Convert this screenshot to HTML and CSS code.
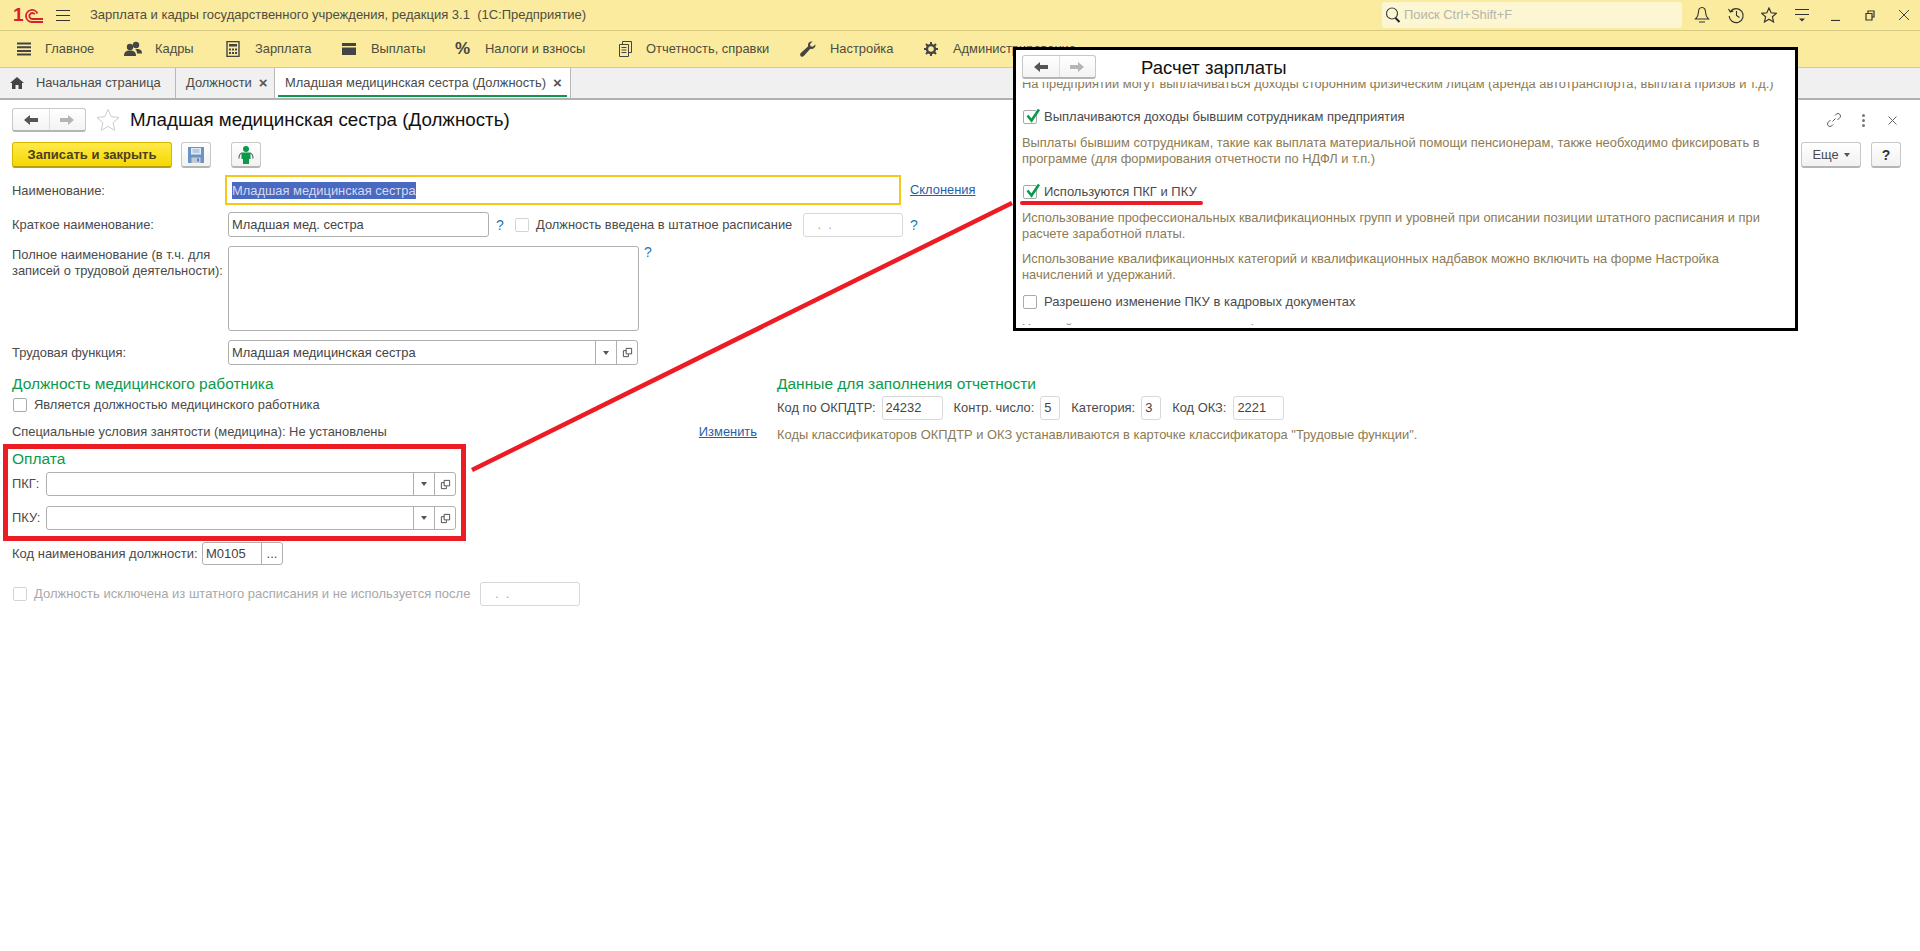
FILE: index.html
```html
<!DOCTYPE html>
<html lang="ru">
<head>
    <meta charset="UTF-8">
    <title>Младшая медицинская сестра (Должность)</title>
    <link rel="stylesheet" href="styles.css">
</head>
<body>
    <svg class="sprite" width="0" height="0">
        <symbol id="i-back" viewBox="0 0 16 12"><path d="M1 6l6-5v3h8v4H7v3z"/></symbol>
        <symbol id="i-next" viewBox="0 0 16 12"><path d="M15 6L9 1v3H1v4h8v3z"/></symbol>
        <symbol id="i-open" viewBox="0 0 12 12"><path d="M4.5 1.5h6v6h-6zM4.5 4H1.5v6.5H7V8" fill="none" stroke="#444" stroke-width="1"/></symbol>
        <symbol id="i-check" viewBox="0 0 16 16"><path d="M2.5 7.5l4 5L14 1.5" fill="none" stroke="#0a9a4c" stroke-width="2.6"/></symbol>
        <symbol id="i-star" viewBox="0 0 24 24"><path d="M12 1.5l3.2 7.2 7.8.8-5.9 5.2 1.7 7.700L12 18.400l-6.800 4 1.700-7.700L1 9.500l7.800-.8z"/></symbol>
    </svg>

    <div class="titlebar">
        <div class="logo">
            <span>1</span>
            <svg width="18" height="14" viewBox="0 0 18 14"><path d="M12.500 4.500A6 6 0 1 0 7 13h11M9.800 5.300A3 3 0 1 0 7 10h11" fill="none" stroke="#d8202a" stroke-width="1.800"/></svg>
        </div>
        <div class="burger"><i></i><i></i><i></i></div>
        <div class="app-title">Зарплата и кадры государственного учреждения, редакция 3.1&nbsp; (1С:Предприятие)</div>
        <div class="search">
            <svg width="16" height="18" viewBox="0 0 16 18"><circle cx="7" cy="7.500" r="5.500" fill="none" stroke="#444" stroke-width="1.200"/><path d="M10.500 12l4 4" stroke="#222" stroke-width="2"/></svg>
            <span>Поиск Ctrl+Shift+F</span>
        </div>
        <div class="win-icons">
            <svg class="wi-bell" width="16" height="18" viewBox="0 0 16 18"><path d="M8 1.500c-2.500 0-3.500 2-3.500 4.500 0 3-1 5-3 7h13c-2-2-3-4-3-7 0-2.500-1-4.500-3.500-4.500zM5 16h6" fill="none" stroke="#333" stroke-width="1.100"/></svg>
            <svg class="wi-clock" width="18" height="18" viewBox="0 0 18 18"><path d="M3.500 5.500A7 7 0 1 1 2.200 10M1.500 3l1.800 3 3-1M9.500 5v4.500l3 2" fill="none" stroke="#333" stroke-width="1.100"/></svg>
            <svg class="wi-star" width="16" height="16" viewBox="0 0 24 24"><use href="#i-star" fill="none" stroke="#333" stroke-width="1.800"/></svg>
            <svg class="wi-list" width="16" height="16" viewBox="0 0 16 16"><path d="M1 2.500h14M1 7.500h14" stroke="#333" stroke-width="1.100"/><path d="M5 11.500h6l-3 3z" fill="#333"/></svg>
            <svg class="wi-min" width="10" height="10" viewBox="0 0 10 10"><path d="M0 9.500h9" stroke="#333" stroke-width="1.200"/></svg>
            <svg class="wi-max" width="10" height="11" viewBox="0 0 10 11"><path d="M3 3V1h6v6H7M1 3.500h6v6.500H1z" fill="none" stroke="#333" stroke-width="1.200"/></svg>
            <svg class="wi-close" width="12" height="12" viewBox="0 0 12 12"><path d="M1 1l10 10M11 1L1 11" stroke="#444" stroke-width="1"/></svg>
        </div>
    </div>

    <div class="menubar">
        <div class="menu-item m-main"><svg width="14" height="14" viewBox="0 0 14 14"><path d="M0 1.500h14M0 5.200h14M0 8.900h14M0 12.600h14" stroke="#444" stroke-width="2"/></svg><span>Главное</span></div>
        <div class="menu-item m-staff"><svg width="18" height="16" viewBox="0 0 18 16"><circle cx="6" cy="6" r="3.200" fill="#444"/><circle cx="12" cy="4" r="3.200" fill="#444"/><path d="M0 15c0-4 2-5.500 6-5.500s6 1.500 6 5.500zM13 8c3 0 5 1 5 4.500h-5c0-2-.5-3.500-2-4z" fill="#444"/></svg><span>Кадры</span></div>
        <div class="menu-item m-pay"><svg width="14" height="16" viewBox="0 0 14 16"><path d="M1 .5h12v15H1z" fill="none" stroke="#444" stroke-width="1.400"/><path d="M3 3h8v2.500H3zM3 7.500h2v2H3zM6 7.500h2v2H6zM9 7.500h2v2H9zM3 11h2v2H3zM6 11h2v2H6zM9 11h2v2H9z" fill="#444"/></svg><span>Зарплата</span></div>
        <div class="menu-item m-out"><svg width="14" height="12" viewBox="0 0 14 12"><path d="M0 0h14v3H0zM0 4.500h14V12H0z" fill="#444"/></svg><span>Выплаты</span></div>
        <div class="menu-item m-tax"><b class="pct">%</b><span>Налоги и взносы</span></div>
        <div class="menu-item m-rep"><svg width="13" height="16" viewBox="0 0 13 16"><path d="M3.500 3V.5h9v11H10M.5 3.500h9v12h-9zM2.500 6.500h5M2.500 9h5M2.500 11.500h5" fill="none" stroke="#444" stroke-width="1"/></svg><span>Отчетность, справки</span></div>
        <div class="menu-item m-set"><svg width="16" height="16" viewBox="0 0 16 16"><path d="M15.500 3.500l-2.800 2.300-2.200-.6-.5-2.200L12.500.5C10 0 8 1.500 8 4c0 .6.100 1 .2 1.300L.8 12c-1 1-.8 2.500 0 3.200s2 .8 3-.2l6.500-7.200c2.800.9 5.600-1.200 5.200-4.300z" fill="#444"/></svg><span>Настройка</span></div>
        <div class="menu-item m-admin"><svg width="14" height="14" viewBox="0 0 14 14"><circle cx="7" cy="7" r="4" fill="none" stroke="#444" stroke-width="2.400"/><path d="M7 0v3M7 11v3M0 7h3M11 7h3M2 2l2 2M10 10l2 2M12 2l-2 2M4 10l-2 2" stroke="#444" stroke-width="2"/></svg><span>Администрирование</span></div>
    </div>

    <div class="tabs">
        <div class="tab tab-home"><svg width="14" height="12" viewBox="0 0 14 12"><path d="M7 0l7 6h-2v6H8.500V8h-3v4H2V6H0z" fill="#444"/></svg><span>Начальная страница</span></div>
        <div class="tab tab-list"><span>Должности</span><b class="tab-x">×</b></div>
        <div class="tab tab-active"><span>Младшая медицинская сестра (Должность)</span><b class="tab-x">×</b></div>
    </div>

    <div class="page">
        <div class="page-head">
            <div class="nav-btns">
                <div class="nav-btn"><svg width="16" height="12"><use href="#i-back" fill="#555"/></svg></div>
                <div class="nav-btn"><svg width="16" height="12"><use href="#i-next" fill="#b5b5b5"/></svg></div>
            </div>
            <svg class="fav" width="24" height="24" viewBox="0 0 24 24"><use href="#i-star" fill="#fff" stroke="#ccc" stroke-width="1"/></svg>
            <h1 class="page-title">Младшая медицинская сестра (Должность)</h1>
            <div class="head-tools">
                <svg width="16" height="16" viewBox="0 0 16 16"><path d="M6.500 9.500l3-3M9 3.500l1.500-1.500a2.500 2.500 0 0 1 3.500 3.500L11.500 8M7 12.500L5.500 14A2.500 2.500 0 0 1 2 10.500L4.500 8" fill="none" stroke="#555" stroke-width="1"/></svg>
                <div class="kebab"><i></i><i></i><i></i></div>
                <svg class="head-close" width="9" height="9" viewBox="0 0 9 9"><path d="M.5.5l8 8M8.500.5l-8 8" stroke="#666" stroke-width="1"/></svg>
            </div>
        </div>

        <div class="toolbar">
            <div class="btn btn-primary">Записать и закрыть</div>
            <div class="btn btn-icon btn-save">
                <svg width="16" height="16" viewBox="0 0 16 16"><path d="M0 0h16v16H0z" fill="#6a94c4"/><path d="M3 1h10v6.500H3z" fill="#e3ecf6"/><path d="M4.500 3h7M4.500 5h7" stroke="#8aa8cc" stroke-width="1"/><path d="M3.500 10.500h9V16h-9z" fill="#c6ccd2"/><path d="M9 11.500h2v3H9z" fill="#5b85b8"/></svg>
            </div>
            <div class="btn btn-icon btn-staff">
                <svg width="18" height="18" viewBox="0 0 18 18"><path d="M5 7C3 7.500 2 8.500 2 12.500M13 7c2 .5 3 1.500 3 5.500" fill="none" stroke="#666" stroke-width="1.200"/><circle cx="9" cy="3" r="3" fill="#0c9a4a"/><path d="M4.500 6.500h9v6.500h-1.500v5H6v-5H4.500z" fill="#0c9a4a"/></svg>
            </div>
            <div class="toolbar-end">
                <div class="btn btn-more">Еще <i class="caret"></i></div>
                <div class="btn btn-help">?</div>
            </div>
        </div>

        <div class="row row-name">
            <label class="label">Наименование:</label>
            <div class="field field-focus"><span class="selected">Младшая медицинская сестра</span></div>
            <a class="link link-decl">Склонения</a>
        </div>
        <div class="row row-short">
            <label class="label">Краткое наименование:</label>
            <div class="field field-short">Младшая мед. сестра</div>
            <span class="hint">?</span>
            <span class="checkbox checkbox-off"></span>
            <span class="check-text">Должность введена в штатное расписание</span>
            <div class="field field-date">&nbsp;.&nbsp;&nbsp;.</div>
            <span class="hint">?</span>
        </div>
        <div class="row row-full">
            <label class="label">Полное наименование (в т.ч. для записей о трудовой деятельности):</label>
            <div class="field field-area"></div>
            <span class="hint">?</span>
        </div>
        <div class="row row-func">
            <label class="label">Трудовая функция:</label>
            <div class="field field-select field-func">
                <span class="field-value">Младшая медицинская сестра</span>
                <span class="field-btn"><i class="caret"></i></span>
                <span class="field-btn"><svg width="11" height="11"><use href="#i-open"/></svg></span>
            </div>
        </div>

        <div class="columns">
            <div class="col-left">
                <h2 class="section">Должность медицинского работника</h2>
                <div class="check-row">
                    <span class="checkbox"></span>
                    <span>Является должностью медицинского работника</span>
                </div>
                <div class="special-row">
                    <span>Специальные условия занятости (медицина): Не установлены</span>
                    <a class="link">Изменить</a>
                </div>
                <h2 class="section section-pay">Оплата</h2>
                <div class="pay-row">
                    <label>ПКГ:</label>
                    <div class="field field-select field-pay">
                        <span class="field-value"></span>
                        <span class="field-btn"><i class="caret"></i></span>
                        <span class="field-btn"><svg width="11" height="11"><use href="#i-open"/></svg></span>
                    </div>
                </div>
                <div class="pay-row pay-row-second">
                    <label>ПКУ:</label>
                    <div class="field field-select field-pay">
                        <span class="field-value"></span>
                        <span class="field-btn"><i class="caret"></i></span>
                        <span class="field-btn"><svg width="11" height="11"><use href="#i-open"/></svg></span>
                    </div>
                </div>
                <div class="code-row">
                    <label>Код наименования должности:</label>
                    <div class="field field-select field-code">
                        <span class="field-value">М0105</span>
                        <span class="field-btn">...</span>
                    </div>
                </div>
                <div class="excluded-row">
                    <span class="checkbox checkbox-off"></span>
                    <span>Должность исключена из штатного расписания и не используется после</span>
                    <div class="field field-date">&nbsp;.&nbsp;&nbsp;.</div>
                </div>
            </div>
            <div class="col-right">
                <h2 class="section">Данные для заполнения отчетности</h2>
                <div class="codes-row">
                    <label>Код по ОКПДТР:</label><div class="field code-box code-w61">24232</div>
                    <label class="code-next">Контр. число:</label><div class="field code-box code-w20">5</div>
                    <label class="code-next">Категория:</label><div class="field code-box code-w20">3</div>
                    <label class="code-next">Код ОКЗ:</label><div class="field code-box code-w51">2221</div>
                </div>
                <div class="note">Коды классификаторов ОКПДТР и ОКЗ устанавливаются в карточке классификатора "Трудовые функции".</div>
            </div>
        </div>
    </div>

    <!-- annotations pasted over the screenshot -->
    <div class="mark-box"></div>
    <svg class="mark-line" width="1920" height="951"><line x1="472" y1="470" x2="1012" y2="203" stroke="#ed1c24" stroke-width="4.500"/></svg>

    <div class="inset">
        <div class="inset-head">
            <div class="nav-btns">
                <div class="nav-btn"><svg width="16" height="12"><use href="#i-back" fill="#555"/></svg></div>
                <div class="nav-btn"><svg width="16" height="12"><use href="#i-next" fill="#b5b5b5"/></svg></div>
            </div>
            <div class="inset-title">Расчет зарплаты</div>
        </div>
        <div class="inset-body">
            <p class="desc desc-cut">На предприятии могут выплачиваться доходы сторонним физическим лицам (аренда автотранспорта, выплата призов и т.д.)</p>
            <div class="inset-check inset-check-1">
                <span class="checkbox"><svg width="16" height="16"><use href="#i-check"/></svg></span>
                <span>Выплачиваются доходы бывшим сотрудникам предприятия</span>
            </div>
            <p class="desc desc-1">Выплаты бывшим сотрудникам, такие как выплата материальной помощи пенсионерам, также необходимо фиксировать в<br>программе (для формирования отчетности по НДФЛ и т.п.)</p>
            <div class="inset-check inset-check-2">
                <span class="checkbox"><svg width="16" height="16"><use href="#i-check"/></svg></span>
                <span>Используются ПКГ и ПКУ</span>
            </div>
            <p class="desc desc-2">Использование профессиональных квалификационных групп и уровней при описании позиции штатного расписания и при<br>расчете заработной платы.</p>
            <p class="desc desc-3">Использование квалификационных категорий и квалификационных надбавок можно включить на форме Настройка<br>начислений и удержаний.</p>
            <div class="inset-check inset-check-3">
                <span class="checkbox"></span>
                <span>Разрешено изменение ПКУ в кадровых документах</span>
            </div>
            <p class="desc desc-last">Настройка ставок и окладов по квалификационным группам доступна в справочнике</p>
        </div>
        <div class="inset-mark"></div>
    </div>
</body>
</html>
```

FILE: styles.css
```css
* {
    margin: 0;
    padding: 0;
    box-sizing: border-box;
}

body {
    position: relative;
    width: 1920px;
    height: 951px;
    overflow: hidden;
    background: #fff;
    color: #4a4a4a;
    font-family: 'Liberation Sans', Arial, sans-serif;
    font-size: 12.9px;
    line-height: 16px;
}

.sprite {
    position: absolute;
}

/* title bar */
.titlebar {
    height: 31px;
    display: flex;
    align-items: center;
    background: #fbeb9f;
    border-bottom: 1px solid #d9ca82;
    padding-left: 13px;
}

.logo {
    width: 30px;
    height: 16px;
    display: flex;
    align-items: flex-end;
    color: #d8202a;
    font-size: 19px;
    font-weight: 700;
    line-height: 16px;
}

.logo span {
    width: 12px;
}

.burger {
    width: 14px;
    margin-left: 13px;
    display: flex;
    flex-direction: column;
    gap: 4px;
}

.burger i {
    display: block;
    height: 1px;
    background: #333;
}

.app-title {
    margin-left: 20px;
    width: 1292px;
    color: #4d4d40;
    font-size: 13px;
}

.search {
    width: 300px;
    height: 26px;
    background: #fdf6d2;
    border-radius: 3px;
    display: flex;
    align-items: center;
    padding-left: 3px;
    color: #b5b5a8;
}

.search span {
    margin-left: 3px;
}

.win-icons {
    display: flex;
    align-items: center;
    margin-left: 12px;
}

.wi-clock { margin-left: 17px; }
.wi-star { margin-left: 16px; }
.wi-list { margin-left: 17px; }
.wi-min { margin-left: 21px; margin-top: 2px; }
.wi-max { margin-left: 24px; }
.wi-close { margin-left: 23px; }

/* sections menu */
.menubar {
    height: 37px;
    display: flex;
    align-items: center;
    background: #fbeb9f;
    border-bottom: 1px solid #d9ca82;
    color: #4d4d40;
}

.menu-item {
    display: flex;
    align-items: center;
    flex-shrink: 0;
}

.pct {
    width: 15px;
    font-size: 17px;
    font-weight: 700;
    color: #444;
}

.m-main { margin-left: 17px; width: 107px; }
.m-main span { margin-left: 14px; }
.m-staff { width: 102px; }
.m-staff span { margin-left: 13px; }
.m-pay { width: 116px; }
.m-pay span { margin-left: 15px; }
.m-out { width: 113px; }
.m-out span { margin-left: 15px; }
.m-tax { width: 164px; }
.m-tax span { margin-left: 15px; }
.m-rep { width: 181px; }
.m-rep span { margin-left: 14px; }
.m-set { width: 124px; }
.m-set span { margin-left: 14px; }
.m-admin span { margin-left: 15px; }

/* open windows tabs */
.tabs {
    height: 32px;
    display: flex;
    background: #f0f0f0;
    border-bottom: 2px solid #b0b0b0;
    color: #4a4a4a;
}

.tab {
    display: flex;
    align-items: center;
    border-right: 1px solid #b8b8b8;
}

.tab-home {
    width: 176px;
    padding-left: 10px;
}

.tab-home span {
    margin-left: 12px;
}

.tab-list {
    width: 99px;
    padding-left: 10px;
}

.tab-active {
    width: 296px;
    padding-left: 10px;
    background: #fff;
    position: relative;
}

.tab-active::after {
    content: "";
    position: absolute;
    left: 3px;
    right: 3px;
    bottom: 1px;
    height: 2px;
    background: #0a9a4c;
}

.tab-x {
    margin-left: 7px;
    font-size: 15px;
    color: #555;
}

/* form */
.page {
    padding: 8px 0 0 12px;
}

.page-head {
    height: 24px;
    display: flex;
    align-items: center;
}

.nav-btns {
    display: flex;
    width: 74px;
    height: 24px;
    background: linear-gradient(#fff, #f3f3f3);
    border: 1px solid #c8c8c8;
    border-bottom: 2px solid #b5b5b5;
    border-radius: 3px;
}

.nav-btn {
    flex: 1;
    display: flex;
    align-items: center;
    justify-content: center;
}

.nav-btn + .nav-btn {
    border-left: 1px solid #ddd;
}

.fav {
    margin-left: 10px;
}

.page-title {
    margin-left: 10px;
    font-size: 18.750px;
    font-weight: 400;
    color: #111;
}

.head-tools {
    margin-left: auto;
    margin-right: 23px;
    display: flex;
    align-items: center;
    gap: 20px;
}

.head-close {
    margin-left: 3px;
}

.kebab {
    display: flex;
    flex-direction: column;
    gap: 2px;
}

.kebab i {
    display: block;
    width: 3px;
    height: 3px;
    border-radius: 50%;
    background: #777;
}

.toolbar {
    margin-top: 10px;
    height: 26px;
    display: flex;
}

.btn {
    display: flex;
    align-items: center;
    justify-content: center;
    height: 26px;
    background: linear-gradient(#fff, #f1f1f1);
    border: 1px solid #c8c8c8;
    border-bottom: 2px solid #b5b5b5;
    border-radius: 3px;
}

.btn-primary {
    width: 160px;
    background: linear-gradient(#ffe94a, #f5d800);
    border-color: #d6b800;
    border-bottom-color: #b89e10;
    color: #4a4020;
    font-weight: 700;
    font-size: 13px;
}

.btn-icon {
    width: 30px;
}

.btn-save {
    margin-left: 9px;
}

.btn-staff {
    margin-left: 20px;
}

.toolbar-end {
    margin-left: auto;
    margin-right: 19px;
    display: flex;
    gap: 10px;
}

.btn-more {
    width: 60px;
    gap: 5px;
}

.btn-help {
    width: 30px;
    font-weight: 700;
    font-size: 14px;
    color: #333;
}

.caret {
    display: inline-block;
    width: 0;
    height: 0;
    border: 3px solid transparent;
    border-top: 4px solid #555;
    border-bottom: 0;
}

.row {
    display: flex;
    align-items: center;
}

.label {
    width: 216px;
    flex-shrink: 0;
}

.field {
    display: flex;
    align-items: center;
    border: 1px solid #b0b0b0;
    border-radius: 3px;
    background: #fff;
    padding-left: 3px;
    color: #444;
}

.row-name {
    margin-top: 7px;
    height: 30px;
}

.row-name .label {
    padding-top: 2px;
}

.field-focus {
    width: 676px;
    height: 30px;
    margin-left: -3px;
    border: 2px solid #f5c71a;
    border-radius: 0;
    padding-left: 5px;
}

.selected {
    background: #4a69c0;
    color: #d5dcf2;
    line-height: 17px;
    white-space: nowrap;
}

.link {
    color: #1f5fa8;
    text-decoration: underline;
    white-space: nowrap;
}

.link-decl {
    margin-left: 9px;
}

.row-short {
    margin-top: 7px;
    height: 25px;
}

.field-short {
    width: 261px;
    height: 25px;
}

.hint {
    color: #1f78b4;
    font-size: 14px;
    width: 8px;
}

.row-short .hint {
    margin-left: 7px;
}

.checkbox {
    display: block;
    position: relative;
    width: 14px;
    height: 14px;
    flex-shrink: 0;
    border: 1px solid #aaa;
    border-radius: 2px;
    background: #fff;
}

.checkbox svg {
    position: absolute;
    left: 1px;
    top: -3px;
}

.checkbox-off {
    border-color: #d4d4d4;
}

.row-short .checkbox {
    margin-left: 11px;
}

.check-text {
    margin-left: 7px;
    width: 267px;
    white-space: nowrap;
}

.field-date {
    width: 100px;
    height: 24px;
    border-color: #d8d8d8;
    color: #aaa;
    padding-left: 10px;
}

.row-full {
    margin-top: 9px;
    height: 85px;
    align-items: flex-start;
}

.row-full .label {
    padding-top: 1px;
}

.field-area {
    width: 411px;
    height: 85px;
}

.row-full .hint {
    margin-left: 5px;
    margin-top: -2px;
}

.row-func {
    margin-top: 9px;
    height: 25px;
}

.field-select {
    padding: 0;
}

.field-value {
    flex: 1;
    padding-left: 3px;
}

.field-btn {
    width: 21px;
    height: 100%;
    display: flex;
    align-items: center;
    justify-content: center;
    border-left: 1px solid #b0b0b0;
}

.field-func {
    width: 410px;
    height: 25px;
}

.columns {
    display: flex;
    margin-top: 10px;
}

.col-left {
    width: 745px;
}

.col-right {
    margin-left: 20px;
}

.section {
    height: 18px;
    line-height: 18px;
    font-size: 15.500px;
    font-weight: 400;
    color: #0a9a4c;
}

.check-row {
    margin-top: 3px;
    height: 18px;
    display: flex;
    align-items: center;
}

.check-row .checkbox {
    margin-left: 1px;
    margin-right: 7px;
}

.special-row {
    margin-top: 9px;
    height: 18px;
    display: flex;
    align-items: center;
    justify-content: space-between;
}

.section-pay {
    margin-top: 9px;
}

.pay-row {
    margin-top: 4px;
    display: flex;
    align-items: center;
}

.pay-row label {
    width: 34px;
}

.pay-row-second {
    margin-top: 10px;
}

.field-pay {
    width: 410px;
    height: 24px;
}

.code-row {
    margin-top: 12px;
    display: flex;
    align-items: center;
    font-size: 13px;
}

.code-row label {
    width: 190px;
}

.field-code {
    width: 81px;
    height: 23px;
}

.excluded-row {
    margin-top: 17px;
    height: 24px;
    display: flex;
    align-items: center;
    color: #a8a8a8;
    font-size: 13px;
}

.excluded-row .checkbox {
    margin-left: 1px;
    margin-right: 7px;
}

.excluded-row .field-date {
    margin-left: 10px;
}

.codes-row {
    margin-top: 3px;
    display: flex;
    align-items: center;
}

.codes-row label {
    margin-right: 6px;
}

.code-next {
    margin-left: 11px;
}

.code-box {
    height: 24px;
    border-color: #d8d8d8;
}

.code-w61 { width: 61px; }
.code-w20 { width: 20px; }
.code-w51 { width: 51px; margin-left: 1px; }

.note {
    margin-top: 7px;
    color: #8c7b55;
    white-space: nowrap;
}

/* annotations */
.mark-box {
    position: absolute;
    left: 3px;
    top: 444px;
    width: 463px;
    height: 97px;
    border: 5px solid #ed1c24;
}

.mark-line {
    position: absolute;
    left: 0;
    top: 0;
}

.inset {
    position: absolute;
    left: 1013px;
    top: 47px;
    width: 785px;
    height: 284px;
    background: #fff;
    border: 3px solid #000;
    padding-bottom: 3px;
    display: flex;
    flex-direction: column;
}

.inset-head {
    height: 32px;
    flex-shrink: 0;
    padding: 5px 0 0 6px;
    display: flex;
    background: #fff;
}

.inset-title {
    margin-left: 45px;
    font-size: 18.500px;
    line-height: 26px;
    color: #111;
}

.inset-body {
    flex: 1;
    overflow: hidden;
    padding: 0 6px;
}

.desc {
    color: #8c7b55;
    white-space: nowrap;
}

.desc-cut { margin-top: -6px; }
.desc-1 { margin-top: 10px; }
.desc-2 { margin-top: 10px; }
.desc-3 { margin-top: 9px; }
.desc-last { margin-top: 11px; }

.inset-check {
    display: flex;
    align-items: center;
    height: 16px;
    gap: 7px;
    font-size: 13px;
}

.inset-check .checkbox {
    margin-left: 1px;
}

.inset-check-1 { margin-top: 17px; }
.inset-check-2 { margin-top: 17px; }
.inset-check-3 { margin-top: 11px; }

.inset-mark {
    position: absolute;
    left: 4px;
    top: 151px;
    width: 183px;
    height: 4px;
    border-radius: 2px;
    background: #ed1c24;
}
```
